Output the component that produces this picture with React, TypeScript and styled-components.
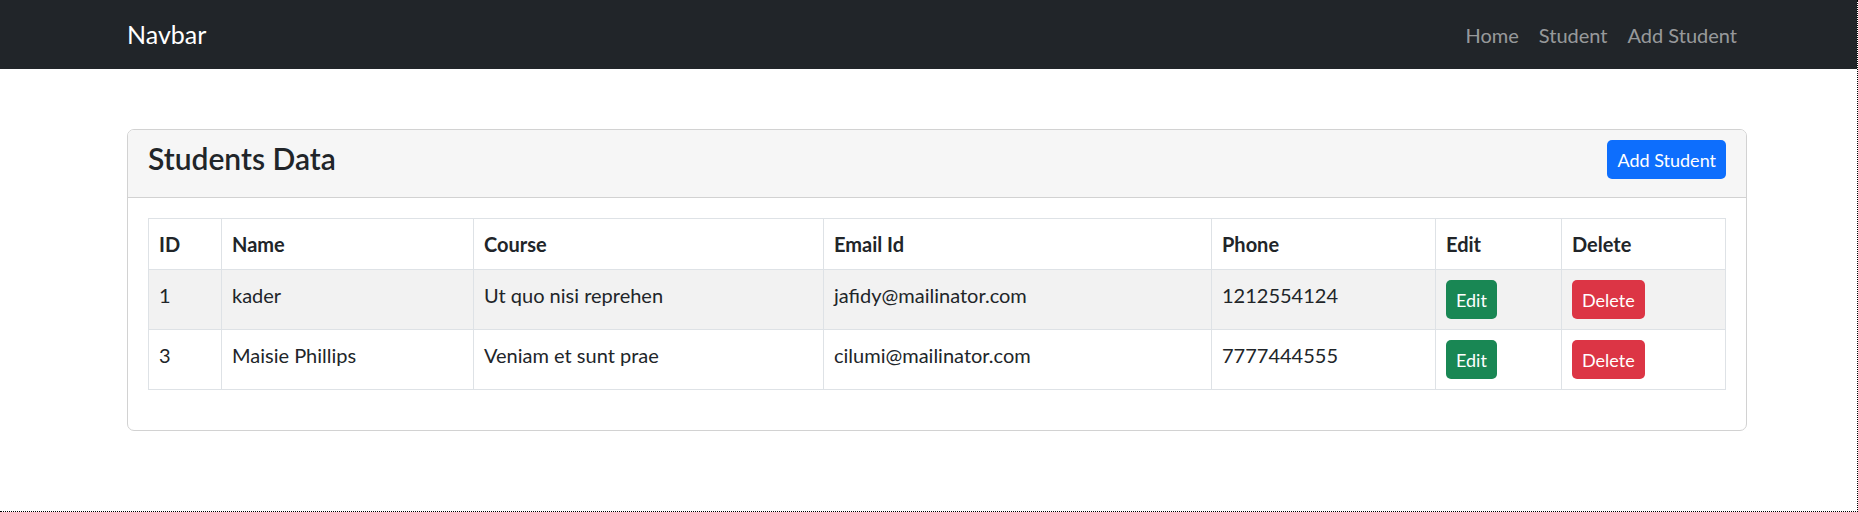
import { createGlobalStyle } from 'styled-components';
import styled from 'styled-components';

const GlobalStyle = createGlobalStyle`
    * {
        box-sizing: border-box;
    }
    body {
        margin: 0;
        font-family: Lato, 'Open Sans', sans-serif;
        color: #212529;
        background: #fff;
    }
`;

const Page = styled.div`
    min-height: 512px;
    border-right: 1px dotted #000;
    border-bottom: 1px dotted #000;
`;

const NavBar = styled.nav`
    height: 69px;
    background: #212529;
    display: flex;
    align-items: center;
`;

const Container = styled.div`
    width: 1620px;
    margin-left: 127px;
`;

const NavInner = styled(Container)`
    display: flex;
    align-items: center;
    justify-content: space-between;
`;

const Brand = styled.a`
    color: #fff;
    font-size: 25px;
    line-height: 37px;
    text-decoration: none;
`;

const NavLinks = styled.ul`
    display: flex;
    margin: 0;
    padding: 0;
    list-style: none;
`;

const NavLink = styled.a`
    display: block;
    padding: 0 10px;
    color: rgba(255, 255, 255, 0.55);
    font-size: 20px;
    line-height: 30px;
    text-decoration: none;
`;

const Main = styled(Container)`
    margin-top: 60px;
`;

const Card = styled.section`
    border: 1px solid #d2d2d2;
    border-radius: 7px;
    overflow: hidden;
`;

const CardHeader = styled.div`
    display: flex;
    justify-content: space-between;
    align-items: flex-start;
    padding: 10px 20px;
    background: #f6f6f6;
    border-bottom: 1px solid #d2d2d2;
`;

const Title = styled.h4`
    margin: 0 0 10px;
    font-size: 30px;
    line-height: 37px;
    font-weight: 600;
`;

const CardBody = styled.div`
    padding: 20px 20px 40px;
`;

const Table = styled.table`
    width: 1577px;
    table-layout: fixed;
    border-collapse: collapse;
    font-size: 20px;
    line-height: 30px;
`;

const Th = styled.th`
    padding: 10px;
    border: 1px solid #dee2e6;
    text-align: left;
    font-weight: 700;
    vertical-align: top;
`;

const Tr = styled.tr<{ $striped?: boolean }>`
    background: ${(p) => (p.$striped ? '#f2f2f2' : '#fff')};
`;

const Td = styled.td`
    padding: 10px;
    border: 1px solid #dee2e6;
    vertical-align: top;
`;

const Button = styled.button<{ $color: string }>`
    display: inline-flex;
    align-items: center;
    height: 39px;
    padding: 0 10px;
    border: none;
    border-radius: 5px;
    background: ${(p) => p.$color};
    color: #fff;
    font-family: inherit;
    font-size: 18px;
    vertical-align: top;
    cursor: pointer;
`;

const columns = [
    { label: 'ID', width: 73 },
    { label: 'Name', width: 252 },
    { label: 'Course', width: 350 },
    { label: 'Email Id', width: 388 },
    { label: 'Phone', width: 224 },
    { label: 'Edit', width: 126 },
    { label: 'Delete', width: 164 },
];

const students = [
    {
        id: 1,
        name: 'kader',
        course: 'Ut quo nisi reprehen',
        email: 'jafidy@mailinator.com',
        phone: '1212554124',
    },
    {
        id: 3,
        name: 'Maisie Phillips',
        course: 'Veniam et sunt prae',
        email: 'cilumi@mailinator.com',
        phone: '7777444555',
    },
];

const App = () => {
    return (
        <>
            <GlobalStyle />
            <Page>
                <NavBar>
                    <NavInner>
                        <Brand href="#">Navbar</Brand>
                        <NavLinks>
                            <li>
                                <NavLink href="#">Home</NavLink>
                            </li>
                            <li>
                                <NavLink href="#">Student</NavLink>
                            </li>
                            <li>
                                <NavLink href="#">Add Student</NavLink>
                            </li>
                        </NavLinks>
                    </NavInner>
                </NavBar>
                <Main>
                    <Card>
                        <CardHeader>
                            <Title>Students Data</Title>
                            <Button $color="#0d6efd">Add Student</Button>
                        </CardHeader>
                        <CardBody>
                            <Table>
                                <colgroup>
                                    {columns.map((c) => (
                                        <col key={c.label} style={{ width: c.width }} />
                                    ))}
                                </colgroup>
                                <thead>
                                    <tr>
                                        {columns.map((c) => (
                                            <Th key={c.label}>{c.label}</Th>
                                        ))}
                                    </tr>
                                </thead>
                                <tbody>
                                    {students.map((s, i) => (
                                        <Tr key={s.id} $striped={i % 2 === 0}>
                                            <Td>{s.id}</Td>
                                            <Td>{s.name}</Td>
                                            <Td>{s.course}</Td>
                                            <Td>{s.email}</Td>
                                            <Td>{s.phone}</Td>
                                            <Td>
                                                <Button $color="#198754">Edit</Button>
                                            </Td>
                                            <Td>
                                                <Button $color="#dc3545">Delete</Button>
                                            </Td>
                                        </Tr>
                                    ))}
                                </tbody>
                            </Table>
                        </CardBody>
                    </Card>
                </Main>
            </Page>
        </>
    );
};
export default App;
